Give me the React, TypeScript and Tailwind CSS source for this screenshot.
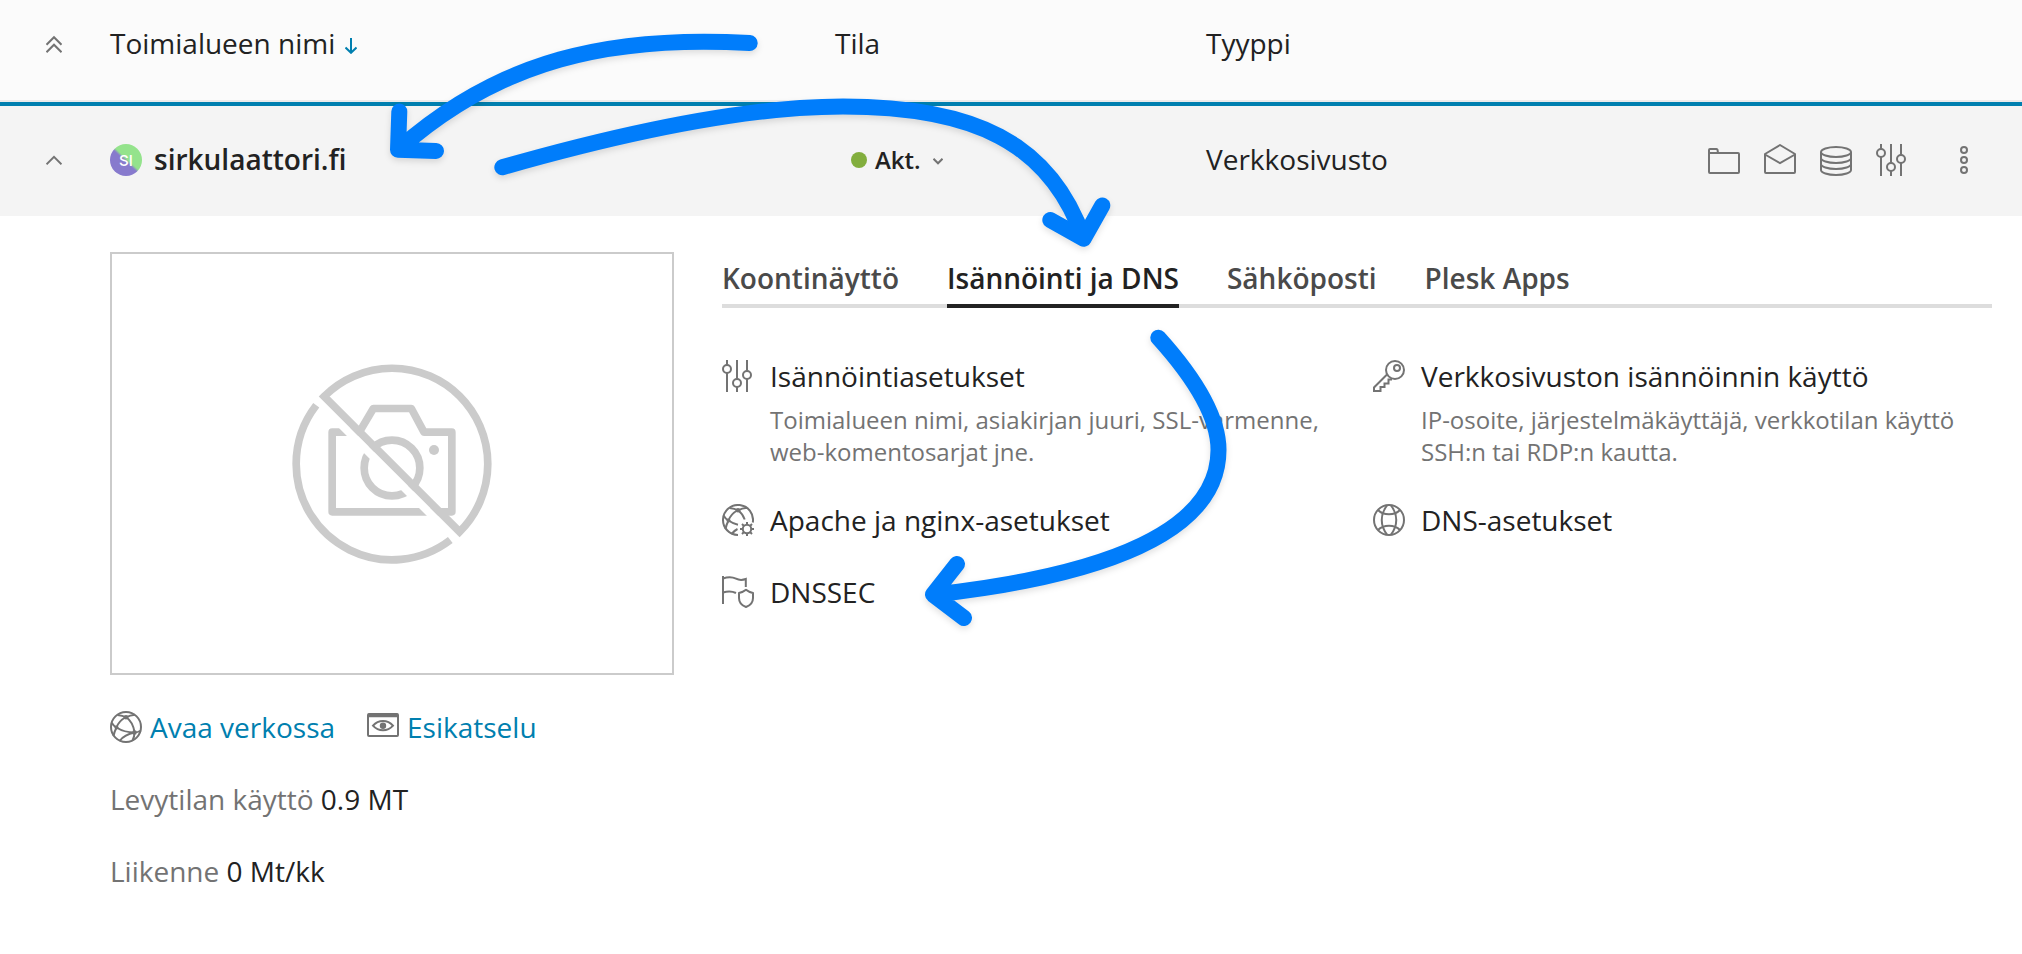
import type { ReactNode } from "react";

function Icon({ children, className = "" }: { children: ReactNode; className?: string }) {
  return (
    <svg
      viewBox="0 0 32 32"
      fill="none"
      stroke="currentColor"
      strokeWidth="2"
      className={`h-8 w-8 shrink-0 text-[#737373] ${className}`}
    >
      {children}
    </svg>
  );
}

const SlidersIcon = () => (
  <Icon>
    <path d="M5 0V5M5 13V32M15 0V19M15 27V32M25 0V11M25 19V32" />
    <circle cx="5" cy="9" r="4" />
    <circle cx="15" cy="23" r="4" />
    <circle cx="25" cy="15" r="4" />
  </Icon>
);

const FolderIcon = () => (
  <Icon>
    <path d="M1 9V6a1 1 0 0 1 1-1H8.500a1 1 0 0 1 1 .8L10 9" />
    <path d="M1 9H30a1 1 0 0 1 1 1V28a1 1 0 0 1-1 1H2a1 1 0 0 1-1-1Z" />
  </Icon>
);

const MailIcon = () => (
  <Icon>
    <path d="M1 10 16 1 31 10V28a1 1 0 0 1-1 1H2a1 1 0 0 1-1-1Z" strokeLinejoin="round" />
    <path d="M1 10.500 16 19.200 31 10.500" />
  </Icon>
);

const DatabaseIcon = () => (
  <Icon>
    <ellipse cx="16" cy="8" rx="15" ry="5" />
    <path d="M1 8V26C1 28.800 7.700 31 16 31S31 28.800 31 26V8" />
    <path d="M1 14C1 16.800 7.700 19 16 19S31 16.800 31 14M1 20C1 22.800 7.700 25 16 25S31 22.800 31 20" />
  </Icon>
);

const NetworkIcon = () => (
  <Icon>
    <circle cx="16" cy="16" r="15" />
    <path d="M7.500 4C10 4.300 13.500 5 16 6.300C18.500 5 22 4 25 3.700" />
    <path d="M16 6C11.500 8.500 8 12 6.500 16.500C5 19.500 4 22 3.500 25" />
    <path d="M16 6C21 9.500 23.500 15 24.500 21C24.500 24.500 24 27 22.500 29.500" />
    <path d="M1.500 11.500C3 14 4.500 15.500 6.500 16.500C12 20 18 21.500 24.500 21.500C27 21.500 29 20.700 31 19.500" />
    <path d="M24.500 21.500C19 22.500 13 25.500 9.500 30" />
    <g fill="currentColor" stroke="none">
      <circle cx="16" cy="6.300" r="2.300" />
      <circle cx="6.500" cy="16.500" r="2" />
      <circle cx="24.500" cy="21.500" r="2.300" />
    </g>
  </Icon>
);

const NetworkGearIcon = () => (
  <Icon>
    <path d="M30.800 18.500A15 15 0 1 0 16 31" />
    <path d="M7.500 4C10 4.300 13.500 5 16 6.300C18.500 5 22 4 25 3.700" />
    <path d="M16 6C11.500 8.500 8 12 6.500 16.500C5 19.500 4 22 3.500 25" />
    <path d="M16 6C19 8.500 21.300 11.500 22.700 15.500" />
    <path d="M1.500 11.500C3 14 4.500 15.500 6.500 16.500C9.500 18.600 12.500 20 16 20.700" />
    <path d="M15.500 25C13 26.200 11.300 27.800 9.500 30" />
    <circle cx="16" cy="6.300" r="2.300" fill="currentColor" stroke="none" />
    <circle cx="6.500" cy="16.500" r="2" fill="currentColor" stroke="none" />
    <circle cx="25" cy="25" r="4.200" />
    <path d="M25 18v3M25 29v3M18 25h3M29 25h3M20 20l2.200 2.200M27.800 27.800 30 30M20 30l2.200-2.200M27.800 22.200 30 20" />
  </Icon>
);

const FlagShieldIcon = () => (
  <Icon>
    <path d="M1 0V28" />
    <path d="M1 2.500C6 .8 10.500 1 14 2.700C17.500 4.400 20.500 4.200 23.800 3V11" />
    <path d="M1 16.500C5.500 15 10 15 14 17" />
    <path d="M24 13.800C22 15.500 19.500 16.500 17 17V22C17 26.800 20 29.500 24 31C28 29.500 31 26.800 31 22V17C28.500 16.500 26 15.500 24 13.800Z" strokeLinejoin="round" />
  </Icon>
);

const KeyIcon = () => (
  <Icon>
    <circle cx="22" cy="10" r="9" />
    <circle cx="24" cy="8" r="3" />
    <path d="M14 14.500 1 27.500V31H7.500V27H11.500V23.500H15.500V19.500H19" />
  </Icon>
);

const GlobeIcon = () => (
  <Icon>
    <circle cx="16" cy="16" r="15" />
    <path d="M14 1.500C7 10.500 7 21.500 14 30.500M18 1.500C25 10.500 25 21.500 18 30.500" />
    <path d="M5 6C10.500 11.800 21.500 11.800 27 6M5 26C10.500 20.200 21.500 20.200 27 26" />
  </Icon>
);

const PreviewIcon = () => (
  <Icon>
    <rect x="1" y="3" width="30" height="22" rx="1" />
    <path d="M1 4.500H31" strokeWidth="3.500" />
    <path d="M6 14.700C11.500 8.500 20.500 8.500 26 14.700C20.500 20.900 11.500 20.900 6 14.700Z" />
    <circle cx="16" cy="14.700" r="3.200" fill="currentColor" stroke="none" />
  </Icon>
);

const NoPhoto = () => (
  <svg viewBox="66 70 600 600" className="h-[200px] w-[200px]" fill="none" stroke="#cbcbcb" strokeWidth="23">
    <path d="M186.500 274.500H268L310 203.500H424L462 274.500H545.500V513.500H186.500Z" strokeLinejoin="round" />
    <circle cx="366" cy="382" r="83.500" />
    <circle cx="492" cy="328" r="15" fill="#cbcbcb" stroke="none" />
    <path d="M150 188 580 618" stroke="#ffffff" strokeWidth="24" />
    <path d="M540.900 598.200A287.500 287.500 0 0 1 78.500 370A287.500 287.500 0 0 1 138.800 193.800" />
    <path d="M162.500 167.200A287.500 287.500 0 0 1 569.300 166.700A287.500 287.500 0 0 1 568.800 573.500Z" />
  </svg>
);

const tabs = ["Koontinäyttö", "Isännöinti ja DNS", "Sähköposti", "Plesk Apps"];

function Tool({ icon, title, children }: { icon: ReactNode; title: string; children?: ReactNode }) {
  return (
    <div className="flex gap-4">
      <div className="pt-1">{icon}</div>
      <div>
        <div className="whitespace-nowrap">{title}</div>
        {children && <p className="mt-2 whitespace-nowrap text-[24px] leading-8 text-[#737373]">{children}</p>}
      </div>
    </div>
  );
}

function Annotations() {
  return (
    <svg
      viewBox="0 0 2022 954"
      className="pointer-events-none absolute inset-0 h-[954px] w-[2022px] drop-shadow-[0_3px_3px_rgba(0,0,0,0.12)]"
      fill="none"
      stroke="#007dfb"
      strokeWidth="16"
      strokeLinecap="round"
      strokeLinejoin="round"
    >
      <path d="M749.700 43C610 35 500 60 400 148M399.300 111.500 398 149.700 436 151" />
      <path d="M502.300 167.300C640 128 755 106.500 843 106.500C973 106.500 1050 142 1083.700 238.700M1050.300 220 1083.700 238.700 1102.300 205.500" />
      <path d="M1158.300 337.700C1192 375 1218.500 416 1218.500 450C1218.500 530 1110 575 934 594.500M957 564 933 594.500 964 618" />
    </svg>
  );
}

export default function App() {
  return (
    <div className="relative h-[954px] w-[2022px] overflow-hidden bg-white font-['Open_Sans',sans-serif] text-[28px] leading-10 text-[#222222]">
      <header className="grid h-[102px] grid-cols-[110px_725px_371px_1fr] border-b-2 border-[#ebebeb] bg-[#fbfbfb] pt-[23px]">
        <svg viewBox="0 0 16 18" className="mt-3 ml-[46px] h-[18px] w-4" fill="none" stroke="#737373" strokeWidth="2">
          <path d="M.5 9.700 8 2.200 15.500 9.700M.5 17.200 8 9.700 15.500 17.200" />
        </svg>
        <div className="flex gap-2.5">
          <span>Toimialueen nimi</span>
          <svg viewBox="0 0 12 16" className="mt-[15px] h-4 w-3" fill="none" stroke="#007faf" strokeWidth="2">
            <path d="M6 0V14.500M.5 9.500 6 14.800 11.500 9.500" />
          </svg>
        </div>
        <div>Tila</div>
        <div>Tyyppi</div>
      </header>

      <div className="grid h-[114px] grid-cols-[110px_725px_371px_1fr] border-t-4 border-[#007faf] bg-[#f4f4f4] pt-[33px]">
        <svg viewBox="0 0 16 10" className="mt-4 ml-[46px] h-2.5 w-4" fill="none" stroke="#737373" strokeWidth="2">
          <path d="M.5 9.300 8 1.800 15.500 9.300" />
        </svg>
        <div className="flex gap-3">
          <span className="mt-[5px] flex h-8 w-8 items-center justify-center rounded-full bg-[linear-gradient(43deg,#877acd_47%,#94e38c_53%)] font-['Inter',sans-serif] text-[15px] leading-none font-medium text-white">
            SI
          </span>
          <span className="font-semibold">sirkulaattori.fi</span>
        </div>
        <div className="flex pl-4 text-[24px] leading-[42px] font-semibold">
          <span className="mt-[13px] h-4 w-4 rounded-full bg-[#82ae3d]" />
          <span className="ml-2">Akt.</span>
          <svg viewBox="0 0 10 7" className="mt-[19px] ml-3 h-[7px] w-2.5" fill="none" stroke="#737373" strokeWidth="2">
            <path d="M.5.800 5 5.300 9.500.800" />
          </svg>
        </div>
        <div className="flex justify-between pr-[54px]">
          <span>Verkkosivusto</span>
          <div className="flex gap-6 pt-[5px]">
            <FolderIcon />
            <MailIcon />
            <DatabaseIcon />
            <SlidersIcon />
            <svg viewBox="0 0 8 32" className="ml-7 h-8 w-2" fill="none" stroke="#737373" strokeWidth="2">
              <circle cx="4" cy="6" r="3" />
              <circle cx="4" cy="16" r="3" />
              <circle cx="4" cy="26" r="3" />
            </svg>
          </div>
        </div>
      </div>

      <main className="flex gap-12 pt-9 pr-[30px] pl-[110px]">
        <aside className="w-[564px] shrink-0">
          <div className="flex h-[423px] items-center justify-center border-2 border-[#cbcbcb]">
            <NoPhoto />
          </div>
          <div className="mt-8 flex gap-8 text-[#007faf]">
            <a className="flex gap-2">
              <span className="pt-1"><NetworkIcon /></span>
              Avaa verkossa
            </a>
            <a className="flex gap-2">
              <span className="pt-1"><PreviewIcon /></span>
              Esikatselu
            </a>
          </div>
          <p className="mt-8">
            <span className="text-[#737373]">Levytilan käyttö</span> 0.9 MT
          </p>
          <p className="mt-8">
            <span className="text-[#737373]">Liikenne</span> 0 Mt/kk
          </p>
        </aside>

        <section className="flex-1 pt-1.5">
          <nav className="flex h-[50px] gap-12 font-semibold text-[#4a4a4a] shadow-[inset_0_-4px_0_#dddddd]">
            {tabs.map((tab, i) => (
              <a key={tab} className={i === 1 ? "border-b-4 border-[#222222] text-[#222222]" : ""}>
                {tab}
              </a>
            ))}
          </nav>
          <div className="mt-12 grid grid-cols-2 gap-8">
            <Tool icon={<SlidersIcon />} title="Isännöintiasetukset">
              Toimialueen nimi, asiakirjan juuri, SSL-varmenne,
              <br />
              web-komentosarjat jne.
            </Tool>
            <Tool icon={<KeyIcon />} title="Verkkosivuston isännöinnin käyttö">
              IP-osoite, järjestelmäkäyttäjä, verkkotilan käyttö
              <br />
              SSH:n tai RDP:n kautta.
            </Tool>
            <Tool icon={<NetworkGearIcon />} title="Apache ja nginx-asetukset" />
            <Tool icon={<GlobeIcon />} title="DNS-asetukset" />
            <Tool icon={<FlagShieldIcon />} title="DNSSEC" />
          </div>
        </section>
      </main>

      <Annotations />
    </div>
  );
}
